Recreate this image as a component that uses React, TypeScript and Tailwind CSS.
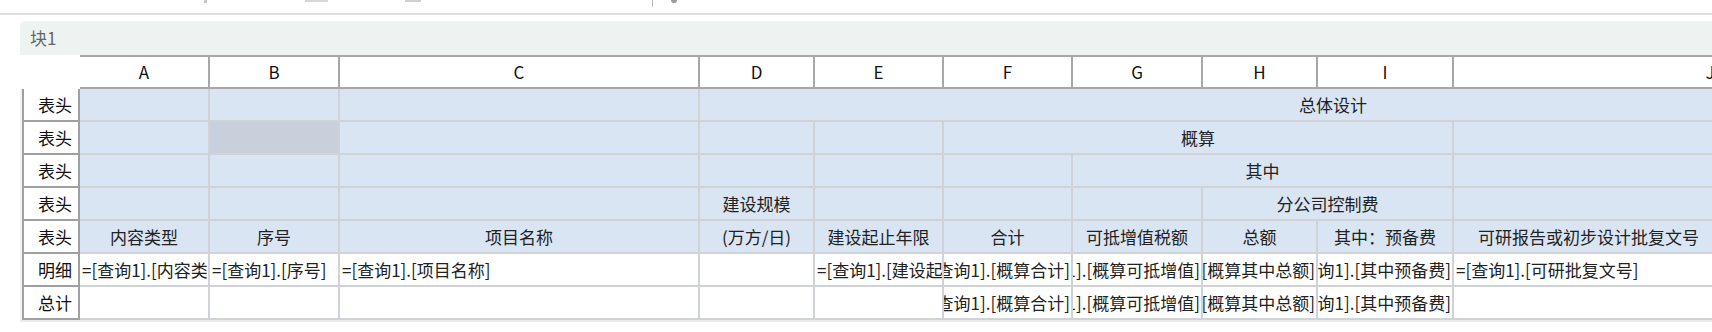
import React from "react";

type Cell = {
  text?: string;
  span?: number;
  bg?: "blue" | "gray" | "white";
  align?: "center" | "left" | "right" | "visible";
};

const colLetters = ["A", "B", "C", "D", "E", "F", "G", "H", "I", "J"];

const B: Cell = { bg: "blue" };

const rows: { label: string; cells: Cell[] }[] = [
  {
    label: "表头",
    cells: [B, B, B, { text: "总体设计", span: 7, bg: "blue" }],
  },
  {
    label: "表头",
    cells: [B, { bg: "gray" }, B, B, B, { text: "概算", span: 4, bg: "blue" }, B],
  },
  {
    label: "表头",
    cells: [B, B, B, B, B, B, { text: "其中", span: 3, bg: "blue" }, B],
  },
  {
    label: "表头",
    cells: [
      B,
      B,
      B,
      { text: "建设规模", bg: "blue" },
      B,
      B,
      B,
      { text: "分公司控制费", span: 2, bg: "blue" },
      B,
    ],
  },
  {
    label: "表头",
    cells: [
      { text: "内容类型", bg: "blue" },
      { text: "序号", bg: "blue" },
      { text: "项目名称", bg: "blue" },
      { text: "(万方/日)", bg: "blue" },
      { text: "建设起止年限", bg: "blue" },
      { text: "合计", bg: "blue" },
      { text: "可抵增值税额", bg: "blue" },
      { text: "总额", bg: "blue" },
      { text: "其中：预备费", bg: "blue" },
      { text: "可研报告或初步设计批复文号", bg: "blue", align: "visible" },
    ],
  },
  {
    label: "明细",
    cells: [
      { text: "=[查询1].[内容类型]", align: "left" },
      { text: "=[查询1].[序号]", align: "left" },
      { text: "=[查询1].[项目名称]", align: "left" },
      {},
      { text: "=[查询1].[建设起止年限]", align: "left" },
      { text: "=[查询1].[概算合计]", align: "right" },
      { text: "=[查询1].[概算可抵增值]", align: "right" },
      { text: "=[查询1].[概算其中总额]", align: "right" },
      { text: "=[查询1].[其中预备费]", align: "right" },
      { text: "=[查询1].[可研批复文号]", align: "left" },
    ],
  },
  {
    label: "总计",
    cells: [
      {},
      {},
      {},
      {},
      {},
      { text: "=[查询1].[概算合计]", align: "right" },
      { text: "=[查询1].[概算可抵增值]", align: "right" },
      { text: "=[查询1].[概算其中总额]", align: "right" },
      { text: "=[查询1].[其中预备费]", align: "right" },
      {},
    ],
  },
];

const spanClass: Record<number, string> = {
  1: "col-span-1",
  2: "col-span-2",
  3: "col-span-3",
  4: "col-span-4",
  7: "col-span-7",
};

function DataCell({ cell }: { cell: Cell }) {
  const bg =
    cell.bg === "blue"
      ? "bg-[#d9e5f3]"
      : cell.bg === "gray"
      ? "bg-[#c8d0db]"
      : "bg-white";
  const align =
    cell.align === "left"
      ? "justify-start pl-[2px]"
      : cell.align === "right"
      ? "justify-end pr-[1px]"
      : cell.align === "visible"
      ? "justify-start pl-[24px]"
      : "justify-center";
  return (
    <div
      className={`${spanClass[cell.span ?? 1]} ${bg} ${align} flex items-center overflow-hidden whitespace-nowrap border-r-2 border-b-2 border-[#cfd3d8] text-[17px] text-[#222]`}
    >
      {cell.text ? <span className="shrink-0">{cell.text}</span> : null}
    </div>
  );
}

export default function App() {
  return (
    <div className="w-[1712px] h-[332px] overflow-hidden bg-white font-['Noto_Sans_CJK_SC','Noto_Sans',sans-serif]">
      {/* toolbar remnants (icons cut off at the top edge) */}
      <div className="h-[13px] flex items-start pl-[204px]">
        <div className="h-[3px] w-[3px] bg-[#c8c8c8]" />
        <div className="ml-[98px] h-[2px] w-[23px] bg-[#d6d6d6]" />
        <div className="ml-[77px] h-[2px] w-[16px] bg-[#d0d0d0]" />
        <div className="ml-[231px] h-[7px] w-[1px] bg-[#bdbdbd]" />
        <div className="ml-[18px] h-[3px] w-[6px] rounded-b-full bg-[#9a9a9a]" />
      </div>
      <div className="h-[2px] bg-[#dedede]" />
      <div className="pt-[6px] pl-[20px]">
        <div className="rounded-tl-[5px] bg-[#eef3f1]">
          <div className="h-[34px] flex items-center pl-[10px] text-[17px] text-[#666]">
            块1
          </div>
          <div className="grid w-max grid-cols-[60px_130px_130px_360px_115px_129px_129px_130px_115px_136px_514px] grid-rows-[34px_33px_33px_33px_33px_33px_33px_33px]">
            <div className="bg-white" />
            {colLetters.map((l) => (
              <div
                key={l}
                className="flex items-center justify-center bg-white border-t-2 border-r-2 border-b-2 border-[#a7a7a7] text-[17px] text-[#111]"
              >
                {l}
              </div>
            ))}
            {rows.map((r, ri) => (
              <React.Fragment key={ri}>
                <div className="ml-[2px] flex items-center justify-end pr-[6px] bg-white border-l-2 border-r-2 border-b-2 border-[#a0a0a0] text-[17px] text-[#111]">
                  {r.label}
                </div>
                {r.cells.map((c, ci) => (
                  <DataCell key={ci} cell={c} />
                ))}
              </React.Fragment>
            ))}
          </div>
          <div className="h-[2px] bg-[#e9ecec]" />
        </div>
      </div>
    </div>
  );
}
